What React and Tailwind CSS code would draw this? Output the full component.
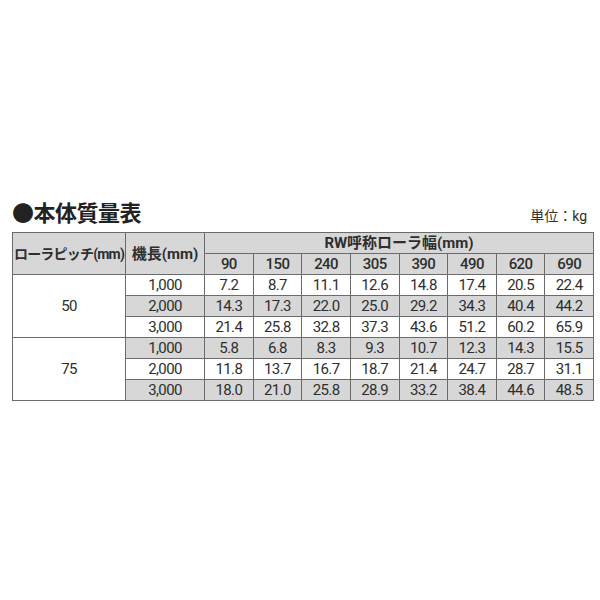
import React from 'react';

const widths = ['90', '150', '240', '305', '390', '490', '620', '690'];

const groups = [
    {
        pitch: '50',
        rows: [
            ['1,000', ['7.2', '8.7', '11.1', '12.6', '14.8', '17.4', '20.5', '22.4']],
            ['2,000', ['14.3', '17.3', '22.0', '25.0', '29.2', '34.3', '40.4', '44.2']],
            ['3,000', ['21.4', '25.8', '32.8', '37.3', '43.6', '51.2', '60.2', '65.9']],
        ],
    },
    {
        pitch: '75',
        rows: [
            ['1,000', ['5.8', '6.8', '8.3', '9.3', '10.7', '12.3', '14.3', '15.5']],
            ['2,000', ['11.8', '13.7', '16.7', '18.7', '21.4', '24.7', '28.7', '31.1']],
            ['3,000', ['18.0', '21.0', '25.8', '28.9', '33.2', '38.4', '44.6', '48.5']],
        ],
    },
];

const font = { fontFamily: 'Roboto, "Noto Sans CJK JP", sans-serif' };
const cell = 'border border-[#6b6b6b] h-[21px] p-0 text-center align-middle';

export default function App() {
    let stripe = 0;
    return (
        <div className="w-[600px] h-[600px] bg-white px-3 pt-[201px] text-[#2e2e2e]" style={font}>
            <div className="flex items-end justify-between pb-[5px]">
                <h2 className="text-[22px] font-bold leading-[26px] tracking-[-0.5px] text-[#222]">●本体質量表</h2>
                <span className="pb-[2px] pr-[1px] text-[14px] leading-[18px]">単位：kg</span>
            </div>
            <table className="w-[582px] table-fixed border-collapse border border-[#555] text-[15px] leading-[20px] tracking-[-0.6px]">
                <colgroup>
                    <col className="w-[113px]" />
                    <col className="w-[79px]" />
                    {widths.map((w) => <col key={w} />)}
                </colgroup>
                <thead>
                    <tr className="bg-[#d7d7d7]">
                        <th rowSpan={2} className={`${cell} text-[14px] font-bold tracking-[-0.8px]`}>ローラピッチ(mm)</th>
                        <th rowSpan={2} className={`${cell} text-[15px] font-bold tracking-normal`}>機長(mm)</th>
                        <th colSpan={8} className={`${cell} h-[20px] text-[15px] font-bold tracking-normal`}>RW呼称ローラ幅(mm)</th>
                    </tr>
                    <tr className="bg-[#d7d7d7]">
                        {widths.map((w) => (
                            <th key={w} className={`${cell} font-medium`}>{w}</th>
                        ))}
                    </tr>
                </thead>
                <tbody>
                    {groups.map((g) =>
                        g.rows.map(([len, vals], i) => {
                            const gray = stripe++ % 2 === 1;
                            return (
                                <tr key={g.pitch + len}>
                                    {i === 0 && (
                                        <td rowSpan={3} className={`${cell} bg-white`}>{g.pitch}</td>
                                    )}
                                    <td className={`${cell} ${gray ? 'bg-[#d7d7d7]' : 'bg-white'}`}>{len}</td>
                                    {vals.map((v, j) => (
                                        <td key={j} className={`${cell} ${gray ? 'bg-[#d7d7d7]' : 'bg-white'}`}>{v}</td>
                                    ))}
                                </tr>
                            );
                        })
                    )}
                </tbody>
            </table>
        </div>
    );
}
